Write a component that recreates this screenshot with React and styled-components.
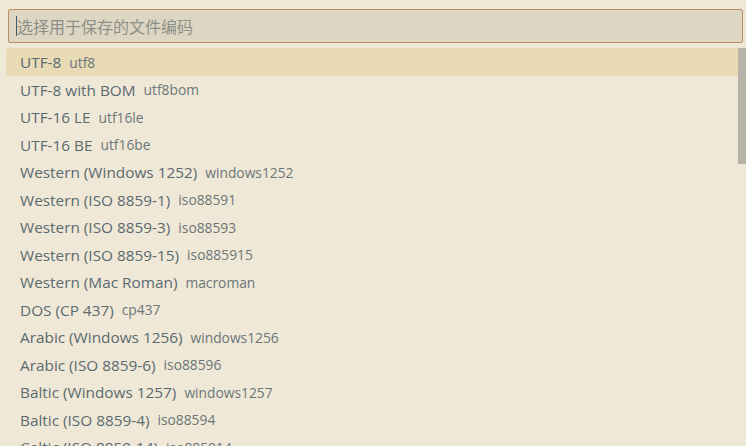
import React from "react";
import styled, { createGlobalStyle } from "styled-components";

const GlobalStyle = createGlobalStyle`
  html, body {
    margin: 0;
    padding: 0;
    background: #efe8d6;
    overflow: hidden;
  }
`;

const encodings = [
  ["UTF-8", "utf8"],
  ["UTF-8 with BOM", "utf8bom"],
  ["UTF-16 LE", "utf16le"],
  ["UTF-16 BE", "utf16be"],
  ["Western (Windows 1252)", "windows1252"],
  ["Western (ISO 8859-1)", "iso88591"],
  ["Western (ISO 8859-3)", "iso88593"],
  ["Western (ISO 8859-15)", "iso885915"],
  ["Western (Mac Roman)", "macroman"],
  ["DOS (CP 437)", "cp437"],
  ["Arabic (Windows 1256)", "windows1256"],
  ["Arabic (ISO 8859-6)", "iso88596"],
  ["Baltic (Windows 1257)", "windows1257"],
  ["Baltic (ISO 8859-4)", "iso88594"],
  ["Celtic (ISO 8859-14)", "iso885914"],
];

const Widget = styled.div`
  width: 746px;
  height: 446px;
  box-sizing: border-box;
  background: #efe8d6;
  border-radius: 6px;
  overflow: hidden;
  display: flex;
  flex-direction: column;
  font-family: "Open Sans", "Noto Sans CJK SC", sans-serif;
`;

const InputWrap = styled.div`
  padding: 9px 3px 5px 8px;
`;

const Input = styled.div`
  height: 34px;
  box-sizing: border-box;
  border: 1px solid #b98c62;
  border-radius: 2px;
  background: #ddd6c2;
  display: flex;
  align-items: center;
  padding-left: 7px;
`;

const Caret = styled.span`
  width: 1px;
  height: 20px;
  background: #3d5a6c;
`;

const Placeholder = styled.span`
  font-family: "Noto Sans CJK SC", sans-serif;
  font-size: 16px;
  color: #8c8f88;
`;

const ListArea = styled.div`
  position: relative;
  flex: 1;
  padding: 0 0 0 6px;
`;

const Row = styled.div`
  height: 27.5px;
  box-sizing: border-box;
  display: flex;
  align-items: center;
  padding: 1px 0 0 14px;
  border-radius: 3px;
  background: ${(p) => (p.$active ? "#e8dbb5" : "transparent")};
  white-space: nowrap;
`;

const Label = styled.span`
  font-size: 15.35px;
  color: #5a6a70;
`;

const Description = styled.span`
  font-size: 13.8px;
  color: #6b7679;
  margin-left: 8px;
`;

const Scrollbar = styled.div`
  position: absolute;
  right: 0;
  top: 0;
  width: 8px;
  height: 116px;
  background: #b7b3a6;
`;

export default function App() {
  return (
    <>
      <GlobalStyle />
      <Widget>
        <InputWrap>
          <Input>
            <Caret />
            <Placeholder>选择用于保存的文件编码</Placeholder>
          </Input>
        </InputWrap>
        <ListArea>
          {encodings.map(([label, desc], i) => (
            <Row key={desc} $active={i === 0}>
              <Label>{label}</Label>
              <Description>{desc}</Description>
            </Row>
          ))}
          <Scrollbar />
        </ListArea>
      </Widget>
    </>
  );
}
